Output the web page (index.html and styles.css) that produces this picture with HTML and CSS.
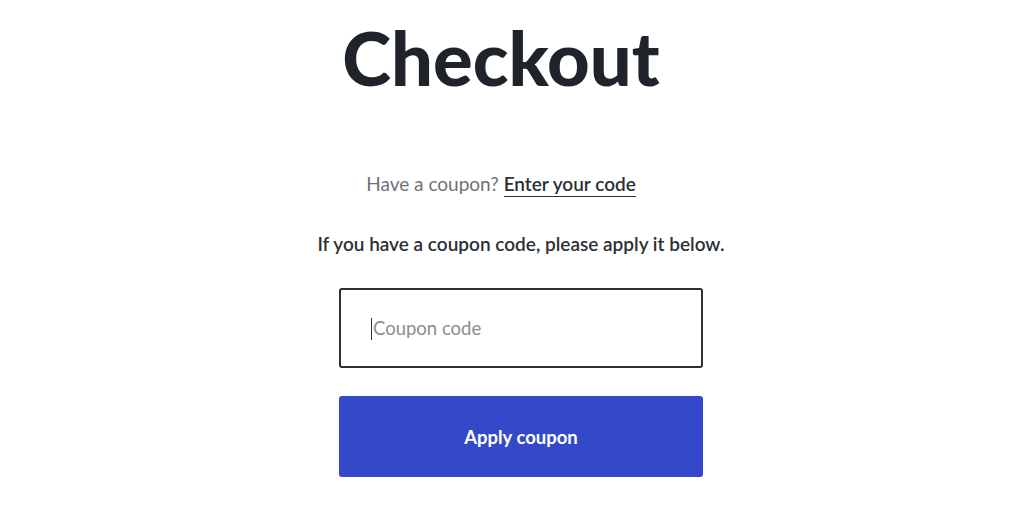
FILE: index.html
```html
<!DOCTYPE html>
<html lang="en">
<head>
<meta charset="utf-8">
<title>Checkout</title>
<link rel="stylesheet" href="styles.css">
</head>
<body>
<main class="page">
  <h1 class="title">Checkout</h1>
  <p class="coupon-toggle">Have a coupon? <a href="#" class="coupon-link">Enter your code</a></p>
  <form class="coupon-form">
    <p class="coupon-info">If you have a coupon code, please apply it below.</p>
    <div class="field"><span class="caret"></span><input class="coupon-input" type="text" placeholder="Coupon code"></div>
    <button class="apply-btn" type="button">Apply coupon</button>
  </form>
</main>
</body>
</html>
```
FILE: styles.css
```css
* { box-sizing: border-box; }
html, body { margin: 0; padding: 0; background: #fff; }
body { font-family: Lato, "Noto Sans", sans-serif; color: #2b2f36; }
.page { display: flex; flex-direction: column; align-items: center; }
.title {
  margin: 18px 0 0 -22px;
  font-size: 74px;
  font-weight: 900;
  line-height: 80px;
  color: #1f232a;
  letter-spacing: 0;
}
.coupon-toggle {
  margin: 75px 0 0 -22px;
  font-size: 19px;
  line-height: 22px;
  color: #6e7178;
}
.coupon-link {
  color: #2b2f36;
  font-weight: 600;
  text-decoration: none;
  border-bottom: 1px solid #2b2f36;
  padding-bottom: 1px;
}
.coupon-form { display: flex; flex-direction: column; align-items: center; margin: 0 0 0 18px; }
.coupon-info {
  margin: 38px 0 0;
  font-size: 19px;
  font-weight: 600;
  line-height: 22px;
  color: #2b2f36;
}
.field {
  position: relative;
  margin-top: 33px;
  width: 364px;
  height: 80px;
  border: 2px solid #2b2f36;
  border-radius: 3px;
  display: flex;
  align-items: center;
  padding-left: 30px;
}
.caret { position: absolute; left: 30px; top: 28px; width: 1px; height: 22px; background: #333; }
.coupon-input {
  border: none;
  outline: none;
  font: inherit;
  font-size: 18.5px;
  color: #2b2f36;
  width: 100%;
  background: transparent;
  padding: 0 0 0 2px;
}
.coupon-input::placeholder { color: #8a8d93; }
.apply-btn {
  margin-top: 28px;
  width: 364px;
  height: 81px;
  border: none;
  border-radius: 3px;
  background: #3449c9;
  color: #fff;
  font: inherit;
  font-size: 18.5px;
  font-weight: 700;
  cursor: pointer;
}
```
